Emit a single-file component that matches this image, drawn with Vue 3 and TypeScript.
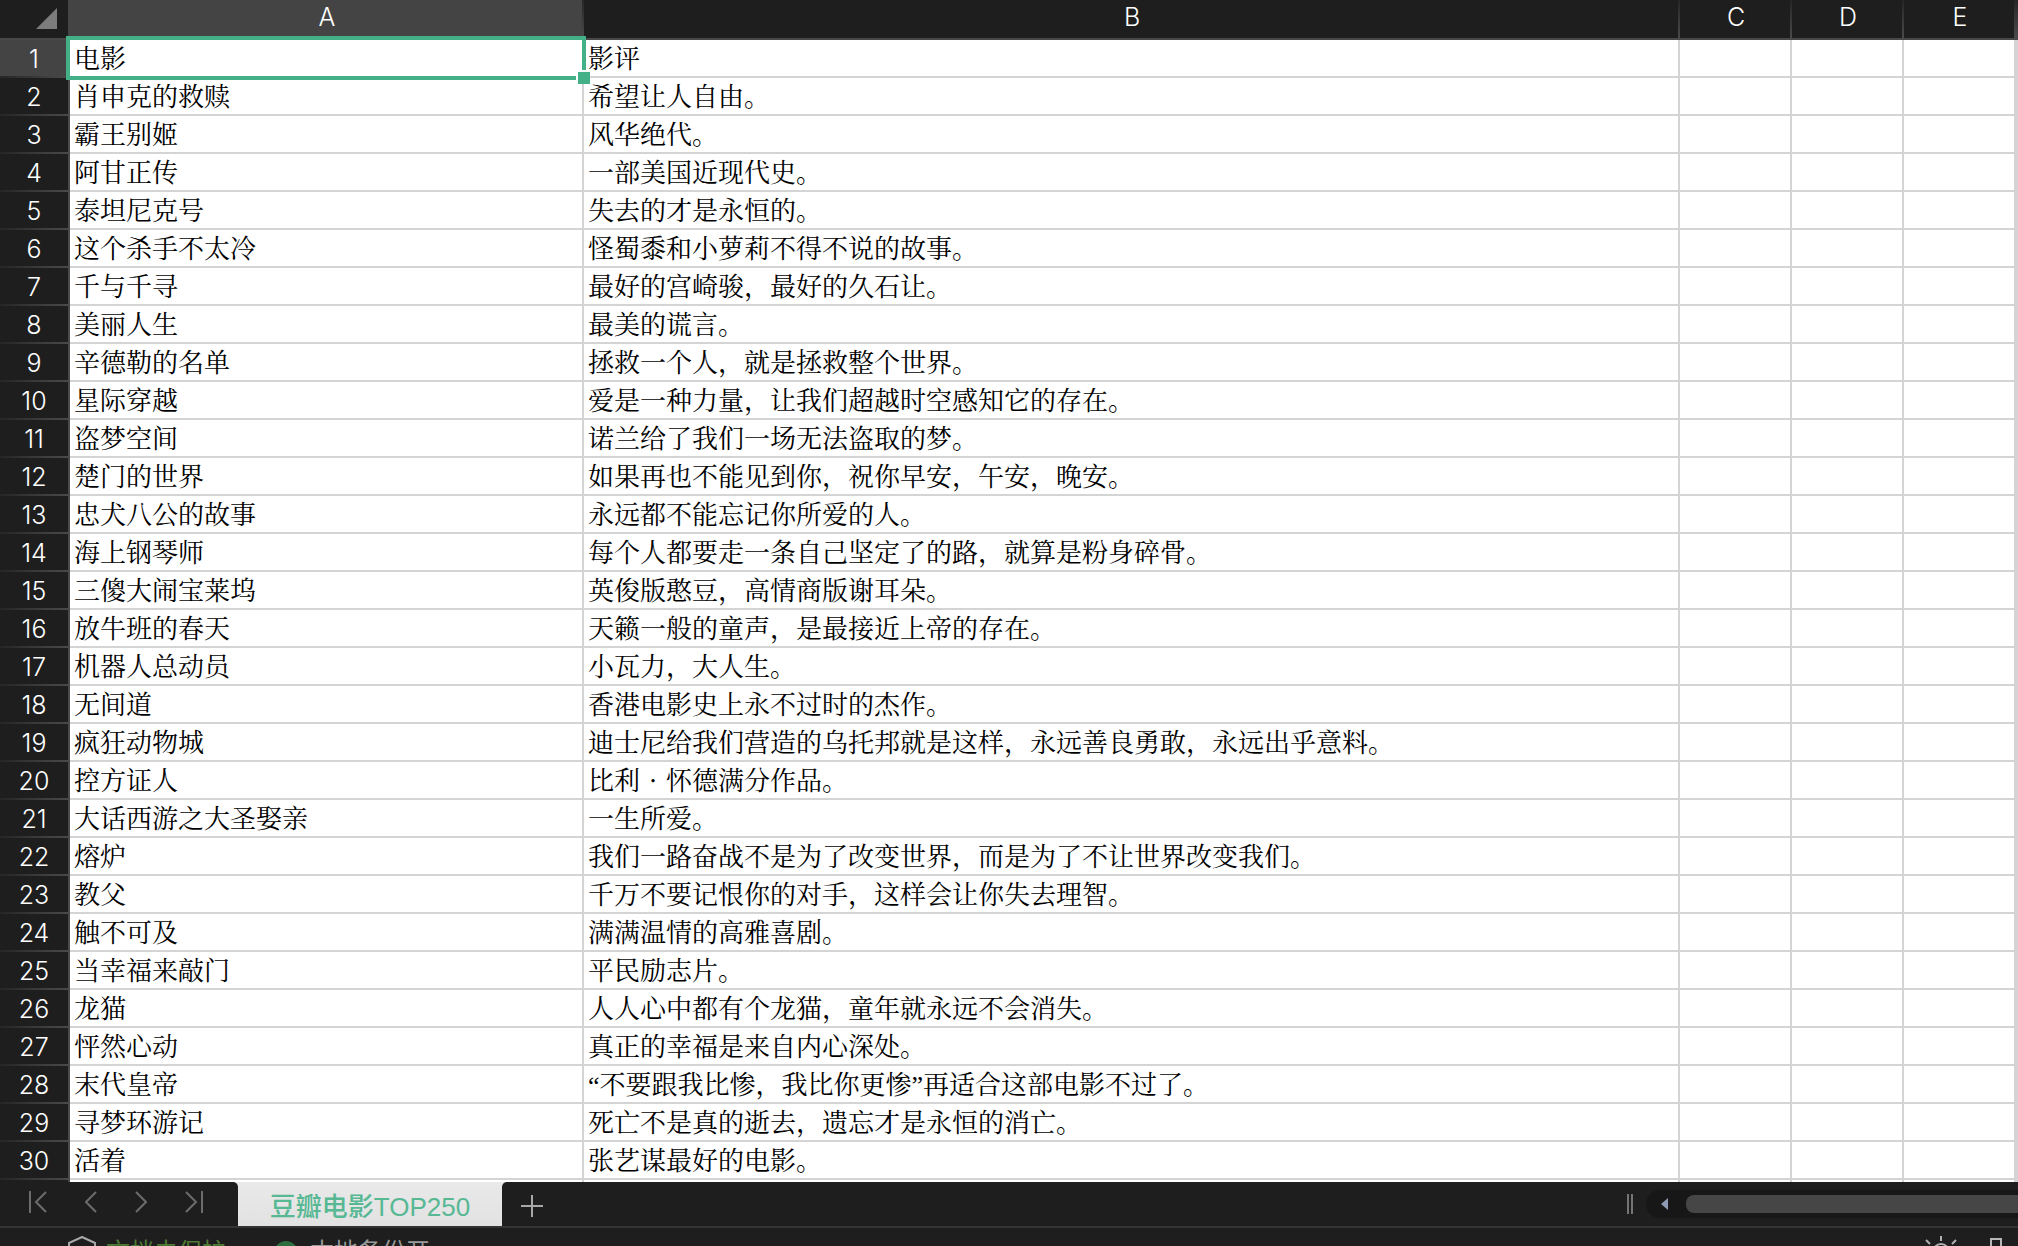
<script setup lang="ts">
import { ref } from 'vue'

type Row = [film: string, review: string]

const columns: string[] = ['A', 'B', 'C', 'D', 'E', '']
const emptyColumns: string[] = ['C', 'D', 'E', 'F']

const rows: Row[] = [
  ['电影', '影评'],
  ['肖申克的救赎', '希望让人自由。'],
  ['霸王别姬', '风华绝代。'],
  ['阿甘正传', '一部美国近现代史。'],
  ['泰坦尼克号', '失去的才是永恒的。'],
  ['这个杀手不太冷', '怪蜀黍和小萝莉不得不说的故事。'],
  ['千与千寻', '最好的宫崎骏，最好的久石让。'],
  ['美丽人生', '最美的谎言。'],
  ['辛德勒的名单', '拯救一个人，就是拯救整个世界。'],
  ['星际穿越', '爱是一种力量，让我们超越时空感知它的存在。'],
  ['盗梦空间', '诺兰给了我们一场无法盗取的梦。'],
  ['楚门的世界', '如果再也不能见到你，祝你早安，午安，晚安。'],
  ['忠犬八公的故事', '永远都不能忘记你所爱的人。'],
  ['海上钢琴师', '每个人都要走一条自己坚定了的路，就算是粉身碎骨。'],
  ['三傻大闹宝莱坞', '英俊版憨豆，高情商版谢耳朵。'],
  ['放牛班的春天', '天籁一般的童声，是最接近上帝的存在。'],
  ['机器人总动员', '小瓦力，大人生。'],
  ['无间道', '香港电影史上永不过时的杰作。'],
  ['疯狂动物城', '迪士尼给我们营造的乌托邦就是这样，永远善良勇敢，永远出乎意料。'],
  ['控方证人', '比利·怀德满分作品。'],
  ['大话西游之大圣娶亲', '一生所爱。'],
  ['熔炉', '我们一路奋战不是为了改变世界，而是为了不让世界改变我们。'],
  ['教父', '千万不要记恨你的对手，这样会让你失去理智。'],
  ['触不可及', '满满温情的高雅喜剧。'],
  ['当幸福来敲门', '平民励志片。'],
  ['龙猫', '人人心中都有个龙猫，童年就永远不会消失。'],
  ['怦然心动', '真正的幸福是来自内心深处。'],
  ['末代皇帝', '“不要跟我比惨，我比你更惨”再适合这部电影不过了。'],
  ['寻梦环游记', '死亡不是真的逝去，遗忘才是永恒的消亡。'],
  ['活着', '张艺谋最好的电影。'],
]

const selectedRow = ref<number>(0)
const selectedColumn = ref<number>(0)

// Curly quotes are set narrow and the middle dot one full character wide
const pieces = (text: string): string[] => text.split(/([“”·])/).filter(Boolean)

const pieceClass = (piece: string): string => {
  if (piece === '·') return 'middot'
  return piece === '“' || piece === '”' ? 'quote' : ''
}
</script>

<template>
  <div class="app" lang="zh-CN">
    <main class="grid">
      <table>
        <colgroup>
          <col class="w-head" />
          <col class="w-film" />
          <col class="w-review" />
          <col class="w-plain" />
          <col class="w-plain" />
          <col class="w-plain" />
          <col />
        </colgroup>
        <thead>
          <tr>
            <th class="corner" aria-label="全选">
              <svg width="21" height="21" viewBox="0 0 21 21" aria-hidden="true">
                <path d="M21 0V21H0Z" fill="#7c7c7c" />
              </svg>
            </th>
            <th
              v-for="(name, c) in columns"
              :key="c"
              scope="col"
              class="col-head"
              :class="{ active: c === selectedColumn }"
            >
              {{ name }}
            </th>
          </tr>
        </thead>
        <tbody>
          <tr v-for="(row, r) in rows" :key="r">
            <th scope="row" class="row-head" :class="{ active: r === selectedRow }">{{ r + 1 }}</th>
            <td
              v-for="(text, c) in row"
              :key="c"
              :class="{ selected: r === selectedRow && c === selectedColumn }"
            ><span v-for="(piece, p) in pieces(text)" :key="p" :class="pieceClass(piece)">{{ piece }}</span><span v-if="r === selectedRow && c === selectedColumn" class="outline"><i class="handle"></i></span></td>
            <td v-for="name in emptyColumns" :key="name"></td>
          </tr>
          <tr>
            <th class="row-head"></th>
            <td v-for="n in 6" :key="n"></td>
          </tr>
        </tbody>
      </table>
    </main>

    <nav class="tabbar">
      <div class="steps">
        <button type="button" aria-label="第一个工作表">
          <svg width="18" height="22" viewBox="0 0 18 22"><path d="M1 0V22M17 1L7 11L17 21" /></svg>
        </button>
        <button type="button" aria-label="上一个工作表">
          <svg width="12" height="22" viewBox="0 0 12 22"><path d="M11 1L1 11L11 21" /></svg>
        </button>
        <button type="button" aria-label="下一个工作表">
          <svg width="12" height="22" viewBox="0 0 12 22"><path d="M1 1L11 11L1 21" /></svg>
        </button>
        <button type="button" aria-label="最后一个工作表">
          <svg width="18" height="22" viewBox="0 0 18 22"><path d="M17 0V22M1 1L11 11L1 21" /></svg>
        </button>
      </div>
      <button type="button" class="sheet">豆瓣电影TOP250</button>
      <div class="rest">
        <button type="button" class="add" aria-label="新建工作表">
          <svg width="22" height="22" viewBox="0 0 22 22"><path d="M11 0V22M0 11H22" /></svg>
        </button>
        <div class="scroll">
          <span class="splitter"></span>
          <div class="track">
            <svg width="7" height="12" viewBox="0 0 7 12" aria-hidden="true"><path d="M7 0V12L0 6Z" fill="#8d99b5" /></svg>
            <span class="thumb"></span>
          </div>
        </div>
      </div>
    </nav>

    <footer class="status">
      <svg class="shield" width="28" height="32" viewBox="0 0 28 32" aria-hidden="true">
        <path d="M14 1L27 7V18Q26 26 14 31Q2 26 1 18V7Z" fill="none" stroke="#a8a8a8" stroke-width="2" />
      </svg>
      <span class="protect">文档未保护</span>
      <svg class="dot" width="24" height="24" viewBox="0 0 24 24" aria-hidden="true">
        <circle cx="12" cy="12" r="12" fill="#2d6e3e" />
      </svg>
      <span class="backup">本地备份开</span>
      <svg class="sun" width="32" height="32" viewBox="0 0 32 32" aria-hidden="true">
        <g fill="none" stroke="#b0b0b0" stroke-width="2">
          <circle cx="16" cy="16" r="8" />
          <path d="M16 0V5M1 4L5 8M31 4L27 8" />
        </g>
      </svg>
      <svg class="view" width="12" height="24" viewBox="0 0 12 24" aria-hidden="true">
        <rect x="1" y="1" width="10" height="22" fill="none" stroke="#b8b8b8" stroke-width="2" />
      </svg>
    </footer>
  </div>
</template>

<style>
body {
  margin: 0;
  background: #1e1e1e;
}
</style>

<style scoped>
.app {
  display: flex;
  flex-direction: column;
  height: 100vh;
  overflow: hidden;
  background: #1e1e1e;
  font-family: "Liberation Sans", "Noto Sans CJK SC", sans-serif;
}

.grid {
  flex: 1;
  min-height: 0;
  overflow: hidden;
  background: #fff;
}

table {
  width: 100%;
  table-layout: fixed;
  border-collapse: separate;
  border-spacing: 0;
}

.w-head { width: 70px; }
.w-film { width: 514px; }
.w-review { width: 1096px; }
.w-plain { width: 112px; }

th,
td {
  box-sizing: border-box;
  height: 38px;
  padding: 0;
  line-height: 34px;
  white-space: nowrap;
}

th {
  background: #1e1e1e;
  color: #fff;
  font-family: Inter, "Liberation Sans", sans-serif;
  font-size: 25px;
  font-weight: 300;
  text-align: center;
}

.col-head,
.corner {
  height: 40px;
  border-bottom: 2px solid #4a484a;
}

.col-head {
  padding: 0 0 4px;
  background: linear-gradient(#262626, #4a4a4a) right / 2px 100% no-repeat #1e1e1e;
}

.col-head.active {
  background-color: #444;
}

.corner {
  padding: 8px 11px 9px 0;
  border-right: 2px solid #444;
  line-height: 0;
}

.corner svg {
  display: block;
  margin-left: auto;
}

.row-head {
  border-right: 2px solid #4a4a4a;
  background: linear-gradient(90deg, #262626, #4a4a4a) bottom / 100% 2px no-repeat #1e1e1e;
}

.row-head.active {
  background-color: #444;
}

td {
  border-right: 2px solid #d4d4d4;
  border-bottom: 2px solid #d4d4d4;
  padding: 0 0 2px 4px;
  color: #000;
  font-family: "Noto Serif CJK SC", "Noto Sans CJK SC", serif;
  font-size: 26px;
  font-weight: 400;
}

.quote {
  font-family: "Liberation Serif", serif;
  line-height: 1;
}

.middot {
  display: inline-block;
  width: 1em;
  text-align: center;
}

.selected {
  position: relative;
}

.outline {
  position: absolute;
  inset: -4px;
  border: 4px solid #43b088;
}

.handle {
  position: absolute;
  right: -8px;
  bottom: -8px;
  width: 12px;
  height: 12px;
  background: #43b088;
  box-shadow: -2px -2px 0 #fff;
}

button {
  border: 0;
  padding: 0;
  background: none;
  font-family: inherit;
}

button svg {
  display: block;
  fill: none;
  stroke: #6c6c6c;
  stroke-width: 2;
}

.tabbar {
  display: flex;
  height: 44px;
  border-bottom: 2px solid #343434;
  background: #e8e8e8;
}

.steps {
  box-sizing: border-box;
  display: flex;
  align-items: center;
  justify-content: space-between;
  width: 238px;
  padding: 0 35px 4px 29px;
  border-top-right-radius: 5px;
  background: #1e1e1e;
}

.sheet {
  width: 264px;
  background: linear-gradient(#e9e9e9, #e2e2e2);
  color: #57b894;
  font-size: 26px;
  font-weight: 500;
  line-height: 38px;
  padding-top: 6px;
}

.rest {
  flex: 1;
  display: flex;
  align-items: center;
  justify-content: space-between;
  border-top-left-radius: 5px;
  background: #1e1e1e;
}

.add {
  margin-left: 19px;
  padding-top: 4px;
}

.add svg {
  stroke: #a8a8a8;
}

.scroll {
  display: flex;
  align-items: center;
  gap: 13px;
}

.splitter {
  width: 2px;
  height: 20px;
  border: solid #747474;
  border-width: 0 2px;
}

.track {
  display: flex;
  align-items: center;
  gap: 18px;
  box-sizing: border-box;
  width: 372px;
  height: 28px;
  padding-left: 15px;
  border-radius: 14px 0 0 14px;
  background: #171717;
}

.thumb {
  flex: 1;
  height: 18px;
  border-radius: 8px 0 0 8px;
  background: #464646;
}

.status {
  display: flex;
  align-items: flex-start;
  height: 18px;
  padding: 8px 16px 0 68px;
  box-sizing: border-box;
  overflow: hidden;
  font-size: 24px;
  line-height: 24px;
  white-space: nowrap;
}

.protect {
  margin: 4px 48px 0 10px;
  color: #4f7a35;
}

.dot {
  margin-top: 5px;
}

.backup {
  margin: 4px 0 0 12px;
  color: #9a9a9a;
}

.sun {
  margin-left: auto;
}

.view {
  margin: 2px 0 0 33px;
}
</style>
